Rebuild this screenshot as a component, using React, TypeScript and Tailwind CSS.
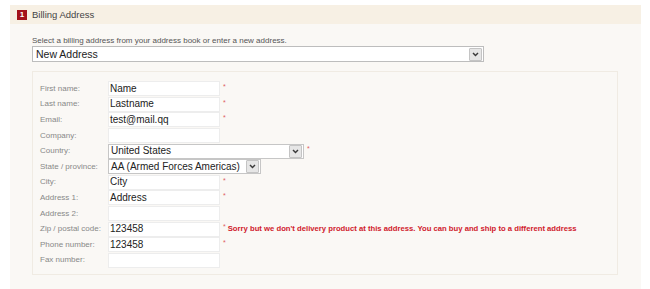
import React from "react";

function Chevron() {
  return (
    <div className="w-[13px] h-[13px] flex items-center justify-center bg-[#e6e6e6] border border-[#c4c4c4] rounded-[1px] shrink-0">
      <svg width="7" height="5" viewBox="0 0 7 5">
        <path d="M1 1 L3.5 3.6 L6 1" stroke="#3a3a3a" strokeWidth="1.4" fill="none" />
      </svg>
    </div>
  );
}

type Row = {
  label: string;
  value?: string;
  req?: boolean;
  kind?: "input" | "country" | "state";
  error?: string;
};

const rows: Row[] = [
  { label: "First name:", value: "Name", req: true },
  { label: "Last name:", value: "Lastname", req: true },
  { label: "Email:", value: "test@mail.qq", req: true },
  { label: "Company:", value: "" },
  { label: "Country:", value: "United States", req: true, kind: "country" },
  { label: "State / province:", value: "AA (Armed Forces Americas)", kind: "state" },
  { label: "City:", value: "City", req: true },
  { label: "Address 1:", value: "Address", req: true },
  { label: "Address 2:", value: "" },
  {
    label: "Zip / postal code:",
    value: "123458",
    req: true,
    error:
      "Sorry but we don't delivery product at this address. You can buy and ship to a different address",
  },
  { label: "Phone number:", value: "123458", req: true },
  { label: "Fax number:", value: "" },
];

export default function App() {
  return (
    <div className="w-[650px] h-[289px] bg-white overflow-hidden font-['Liberation_Sans',Arial,sans-serif]">
      <div className="ml-[10px] mt-[5px] w-[631px] h-[290px] bg-[#faf8f5]">
        <div className="h-[19px] bg-[#f7f0e4] flex items-center pl-[7px]">
          <div className="w-[10px] h-[10px] bg-[#a3121a] text-white text-[8px] font-bold leading-none flex items-center justify-center">
            1
          </div>
          <span className="ml-[5px] text-[9.5px] text-[#444] leading-none">Billing Address</span>
        </div>
        <div className="pl-[22px] pt-[13px]">
          <p className="text-[8px] leading-[8px] text-[#555]">
            Select a billing address from your address book or enter a new address.
          </p>
          <div className="mt-[1px] w-[452px] h-[16px] bg-white border border-[#bdbdbd] flex items-center justify-between pl-[3px] pr-[1px]">
            <span className="text-[10.5px] text-[#222] leading-none">New Address</span>
            <Chevron />
          </div>
          <div className="mt-[9px] w-[586px] border border-[#f0ebe3] pt-[9px] pl-[7px] pb-[6px]">
            {rows.map((r) => (
              <div key={r.label} className="flex items-center h-[15.6px]">
                <div className="w-[68px] shrink-0 text-[8px] text-[#888] leading-none whitespace-nowrap">{r.label}</div>
                {r.kind === "country" || r.kind === "state" ? (
                  <div
                    className={`${
                      r.kind === "country" ? "w-[196px]" : "w-[153px]"
                    } shrink-0 h-[15px] bg-white border border-[#c6c6c6] flex items-center justify-between pl-[2px] pr-[1px]`}
                  >
                    <span className="text-[10px] text-[#222] leading-none whitespace-nowrap">{r.value}</span>
                    <Chevron />
                  </div>
                ) : (
                  <div className="w-[112px] shrink-0 h-[15px] bg-white border border-[#ededed] flex items-center pl-[1px]">
                    <span className="text-[10px] text-[#222] leading-none whitespace-nowrap">{r.value}</span>
                  </div>
                )}
                {r.req && (
                  <span className="ml-[3px] text-[7px] leading-none text-[#e06060] self-start mt-[2px]">*</span>
                )}
                {r.error && (
                  <span className="ml-[2px] text-[7.7px] font-bold leading-none text-[#d0202c] whitespace-nowrap">
                    {r.error}
                  </span>
                )}
              </div>
            ))}
          </div>
        </div>
      </div>
    </div>
  );
}
